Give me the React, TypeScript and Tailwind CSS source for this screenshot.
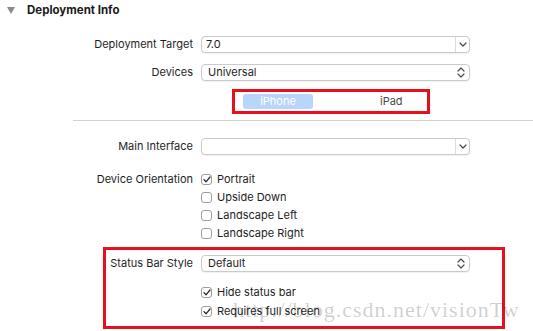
import React from "react";

const FONT = { fontFamily: "Inter, 'Liberation Sans', sans-serif" };

const ChevronDown = () => (
  <svg width="8" height="5" viewBox="0 0 8 5" fill="none">
    <path d="M1 1l3 3 3-3" stroke="#4a4a4a" strokeWidth="1.2" strokeLinecap="round" strokeLinejoin="round" />
  </svg>
);

const ChevronUpDown = () => (
  <svg width="8" height="11" viewBox="0 0 8 11" fill="none">
    <path d="M1 4l3-3 3 3M1 7l3 3 3-3" stroke="#4a4a4a" strokeWidth="1.2" strokeLinecap="round" strokeLinejoin="round" />
  </svg>
);

// combo box with divider + down arrow
const Combo = ({ value }: { value: string }) => (
  <div className="flex h-[17px] w-[269px] items-center rounded-[4px] border border-[#cacaca] bg-white shadow-[0_1px_1px_rgba(0,0,0,0.06)]">
    <span className="flex-1 pl-[4px] text-[11px] leading-none text-[#1e1e1e]">{value}</span>
    <span className="flex h-full w-[14px] items-center justify-center border-l border-[#dcdcdc]">
      <ChevronDown />
    </span>
  </div>
);

// popup button with up/down arrows
const Popup = ({ value }: { value: string }) => (
  <div className="flex h-[17px] w-[269px] items-center rounded-[4px] border border-[#cacaca] bg-white shadow-[0_1px_1px_rgba(0,0,0,0.06)]">
    <span className="flex-1 pl-[6px] text-[11px] leading-none text-[#1e1e1e]">{value}</span>
    <span className="flex w-[16px] items-center justify-center">
      <ChevronUpDown />
    </span>
  </div>
);

const Check = ({ label, checked }: { label: string; checked?: boolean }) => (
  <div className="flex h-[18px] items-center gap-[5px]">
    <span className="flex h-[11px] w-[11px] items-center justify-center rounded-[3px] border border-[#9d9d9d] bg-white">
      {checked && (
        <svg width="8" height="7" viewBox="0 0 8 7" fill="none">
          <path d="M1 3.6l2 2.2L7 1" stroke="#2a2a2a" strokeWidth="1.3" strokeLinecap="round" strokeLinejoin="round" />
        </svg>
      )}
    </span>
    <span className="text-[11px] leading-none text-[#1e1e1e]">{label}</span>
  </div>
);

const Label = ({ children, w = "w-[193px]" }: { children: React.ReactNode; w?: string }) => (
  <div className={`${w} shrink-0 text-right text-[11px] leading-none text-[#1e1e1e]`}>{children}</div>
);

export default function App() {
  return (
    <div className="relative h-[331px] w-[533px] overflow-hidden bg-white" style={FONT}>
      {/* header */}
      <div className="flex h-[20px] items-center pl-[7px] pt-[1px]">
        <svg width="8" height="7" viewBox="0 0 8 7">
          <path d="M0 0h8L4 7z" fill="#8a8a8a" />
        </svg>
        <span className="ml-[12px] text-[11.5px] font-bold leading-none text-[#1a1a1a]">Deployment Info</span>
      </div>

      <div className="mt-[16px] flex flex-col">
        <div className="flex items-center gap-[8px]">
          <Label>Deployment Target</Label>
          <Combo value="7.0" />
        </div>
        <div className="mt-[11px] flex items-center gap-[8px]">
          <Label>Devices</Label>
          <Popup value="Universal" />
        </div>

        {/* segmented control, highlighted */}
        <div className="ml-[232px] mt-[8px] flex h-[25px] w-[198px] items-center border-[3px] border-[#e5101c] pl-[8px]">
          <span className="flex h-[15px] w-[70px] items-center justify-center rounded-[3px] bg-[#b8d5fb] text-[11px] leading-none text-white">
            iPhone
          </span>
          <span className="ml-[67px] text-[11px] leading-none text-[#4a4a4a]">iPad</span>
        </div>

        <div className="ml-[73px] mt-[6px] border-t border-[#d2d2d2]" />

        <div className="mt-[17px] flex items-center gap-[8px]">
          <Label>Main Interface</Label>
          <Combo value="" />
        </div>

        <div className="mt-[15px] flex gap-[8px]">
          <Label>
            <div className="flex h-[18px] items-center justify-end">Device Orientation</div>
          </Label>
          <div className="flex flex-col">
            <Check label="Portrait" checked />
            <Check label="Upside Down" />
            <Check label="Landscape Left" />
            <Check label="Landscape Right" />
          </div>
        </div>

        {/* status bar section, highlighted */}
        <div className="ml-[103px] mt-[5px] flex h-[82px] w-[402px] flex-col border-[3px] border-[#e5101c] pt-[5px]">
          <div className="flex items-center gap-[8px]">
            <Label w="w-[87px]">Status Bar Style</Label>
            <Popup value="Default" />
          </div>
          <div className="ml-[95px] mt-[11px] flex flex-col gap-[1px]">
            <Check label="Hide status bar" checked />
            <Check label="Requires full screen" checked />
          </div>
        </div>
      </div>

      {/* watermark */}
      <div
        className="pointer-events-none absolute left-[233px] top-[299px] text-[22px] leading-none tracking-[1px] text-black/20"
        style={{ fontFamily: "'Liberation Serif', serif" }}
      >
        http://blog.csdn.net/visionTw
      </div>
    </div>
  );
}
